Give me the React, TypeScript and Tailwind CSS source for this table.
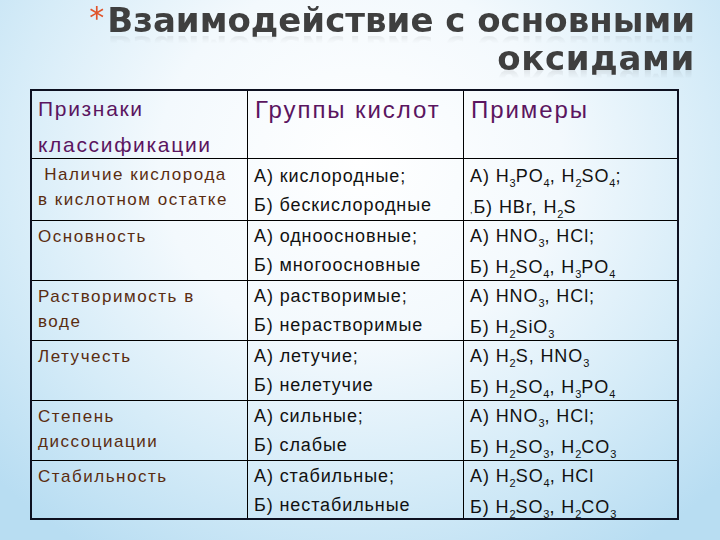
import React from 'react'

const Sub = ({ children }: { children: React.ReactNode }) => (
  <span className="relative top-[5px] text-[11px] tracking-normal">{children}</span>
)

type Row = {
  sign: string[]
  groups: string[]
  examples: React.ReactNode[]
  h: string
  last?: boolean
}

const rows: Row[] = [
  {
    sign: ['\u00a0Наличие кислорода', 'в кислотном остатке'],
    groups: ['А) кислородные;', 'Б) бескислородные'],
    examples: [
      <>А) H<Sub>3</Sub>PO<Sub>4</Sub>, H<Sub>2</Sub>SO<Sub>4</Sub>;</>,
      <><span className="text-[9px]">,</span>Б) HBr, H<Sub>2</Sub>S</>,
    ],
    h: 'h-[62px]',
  },
  {
    sign: ['Основность'],
    groups: ['А) одноосновные;', 'Б) многоосновные'],
    examples: [
      <>А) HNO<Sub>3</Sub>, HCl;</>,
      <>Б) H<Sub>2</Sub>SO<Sub>4</Sub>, H<Sub>3</Sub>PO<Sub>4</Sub></>,
    ],
    h: 'h-[60px]',
  },
  {
    sign: ['Растворимость в', 'воде'],
    groups: ['А) растворимые;', 'Б) нерастворимые'],
    examples: [
      <>А) HNO<Sub>3</Sub>, HCl;</>,
      <>Б) H<Sub>2</Sub>SiO<Sub>3</Sub></>,
    ],
    h: 'h-[60px]',
  },
  {
    sign: ['Летучесть'],
    groups: ['А) летучие;', 'Б) нелетучие'],
    examples: [
      <>А) H<Sub>2</Sub>S, HNO<Sub>3</Sub></>,
      <>Б) H<Sub>2</Sub>SO<Sub>4</Sub>, H<Sub>3</Sub>PO<Sub>4</Sub></>,
    ],
    h: 'h-[60px]',
  },
  {
    sign: ['Степень', 'диссоциации'],
    groups: ['А) сильные;', 'Б) слабые'],
    examples: [
      <>А) HNO<Sub>3</Sub>, HCl;</>,
      <>Б) H<Sub>2</Sub>SO<Sub>3</Sub>, H<Sub>2</Sub>CO<Sub>3</Sub></>,
    ],
    h: 'h-[60px]',
  },
  {
    sign: ['Стабильность'],
    groups: ['А) стабильные;', 'Б) нестабильные'],
    examples: [
      <>А) H<Sub>2</Sub>SO<Sub>4</Sub>, HCl</>,
      <>Б) H<Sub>2</Sub>SO<Sub>3</Sub>, H<Sub>2</Sub>CO<Sub>3</Sub></>,
    ],
    h: 'h-[57px]',
    last: true,
  },
]

export default function App() {
  return (
    <div className="h-[540px] w-[720px] overflow-hidden bg-[radial-gradient(ellipse_70%_85%_at_50%_30%,#ffffff_0%,#f3f9fd_40%,#d6ecf8_70%,#b8ddf2_100%)] font-['Liberation_Sans',Arial,sans-serif]">
      {/* title */}
      <div className="h-[89px] pr-[25px] pt-[2px] text-right font-['DejaVu_Sans',sans-serif] text-[34px] font-bold leading-[36px] text-[#3f3f3f]">
        <div className="[-webkit-box-reflect:below_-12px_linear-gradient(transparent_60%,rgba(255,255,255,0.18))]">
          <span className="relative -top-[4px] mr-[3px] text-[30px] font-normal text-[#e0532a]">*</span>
          Взаимодействие с основными
        </div>
        <div className="tracking-[0.02em] [-webkit-box-reflect:below_-12px_linear-gradient(transparent_60%,rgba(255,255,255,0.18))]">
          оксидами
        </div>
      </div>

      {/* table */}
      <div className="ml-[30px] w-[649px] border-2 border-[#0d1020]">
        <div className="flex h-[68px] border-b border-black text-[#5b1560]">
          <div className="w-[216px] border-r border-black pl-[6px] text-[21px] leading-[36px] tracking-[0.08em]">
            <div>Признаки</div>
            <div>классификации</div>
          </div>
          <div className="w-[216px] border-r border-black pl-[7px] pt-[1px] text-[24px] leading-[36px] tracking-[0.08em]">
            Группы кислот
          </div>
          <div className="flex-1 pl-[7px] pt-[1px] text-[24px] leading-[36px] tracking-[0.08em]">
            Примеры
          </div>
        </div>

        {rows.map((r, i) => (
          <div
            key={i}
            className={`flex ${r.h} ${r.last ? '' : 'border-b border-black'}`}
          >
            <div className="w-[216px] border-r border-black pl-[6px] pt-[3px] text-[17px] leading-[25px] tracking-[0.09em] text-[#5a2c10]">
              {r.sign.map((s, j) => (
                <div key={j} className="whitespace-pre">{s}</div>
              ))}
            </div>
            <div className={`w-[216px] border-r border-black pl-[6px] ${i === 0 ? 'pt-[3px]' : 'pt-[1px]'} text-[18px] leading-[29px] tracking-[0.05em] text-[#111]`}>
              {r.groups.map((s, j) => (
                <div key={j}>{s}</div>
              ))}
            </div>
            <div className={`flex-1 pl-[6px] ${i === 0 ? 'pt-[3px]' : 'pt-[1px]'} text-[18px] leading-[29px] tracking-[0.05em] text-[#111]`}>
              {r.examples.map((s, j) => (
                <div key={j}>{s}</div>
              ))}
            </div>
          </div>
        ))}
      </div>
    </div>
  )
}
